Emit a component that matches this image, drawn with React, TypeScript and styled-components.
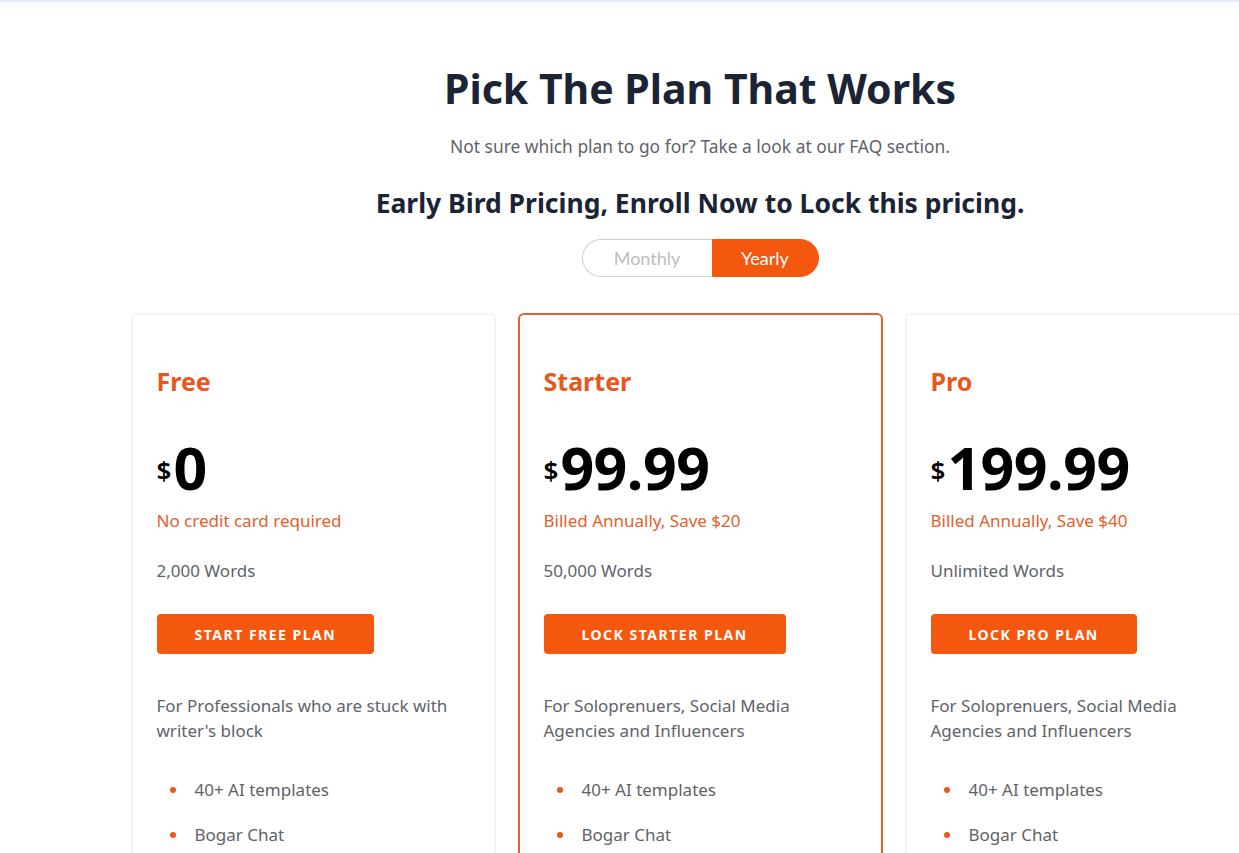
import React from "react";
import styled, { createGlobalStyle } from "styled-components";

const GlobalStyle = createGlobalStyle`
  html, body {
    margin: 0;
    padding: 0;
    background: #fff;
    overflow: hidden;
  }
  body {
    font-family: "Noto Sans", "Open Sans", sans-serif;
  }
`;

const Page = styled.div`
  width: 1400px;
  min-height: 853px;
  border-top: 2px solid #e6eef8;
  background: linear-gradient(#fbfefd 0px, #fff 20px);
  box-sizing: border-box;
`;

const Section = styled.section`
  display: flex;
  flex-direction: column;
  align-items: center;
  padding-top: 58px;
`;

const Title = styled.h1`
  margin: 0;
  font-size: 41px;
  line-height: 56px;
  font-weight: 700;
  color: #1b2434;
`;

const Subtitle = styled.p`
  margin: 18px 0 0;
  font-size: 17.4px;
  line-height: 24px;
  color: #5f6368;
`;

const Promo = styled.h2`
  margin: 27px 0 0;
  font-size: 26.5px;
  line-height: 36px;
  font-weight: 700;
  color: #1b2434;
`;

const Toggle = styled.div`
  display: flex;
  margin-top: 18px;
  height: 38px;
`;

const ToggleOption = styled.button<{ $active?: boolean; $side: "left" | "right" }>`
  font-family: "Lato", "Noto Sans", sans-serif;
  font-size: 18px;
  height: 38px;
  padding: 0;
  cursor: pointer;
  width: ${(p) => (p.$side === "left" ? "130px" : "107px")};
  border: 1px solid ${(p) => (p.$active ? "#f4580f" : "#cfcfcf")};
  border-right: ${(p) => (p.$side === "left" ? "none" : undefined)};
  border-radius: ${(p) => (p.$side === "left" ? "19px 0 0 19px" : "0 19px 19px 0")};
  background: ${(p) => (p.$active ? "#f4580f" : "#fff")};
  color: ${(p) => (p.$active ? "#fff" : "#bdbdbd")};
`;

const Cards = styled.div`
  display: grid;
  grid-template-columns: repeat(3, 365px);
  gap: 22px;
  margin-top: 36px;
`;

const Card = styled.div<{ $featured?: boolean }>`
  border: ${(p) => (p.$featured ? "2px solid #e2622b" : "2px solid #edf4fa")};
  border-radius: 6px;
  padding: 49px 24px 0;
  min-height: 600px;
  background: #fff;
`;

const PlanName = styled.h3`
  margin: 0;
  font-size: 25px;
  line-height: 34px;
  font-weight: 700;
  color: #e8581a;
`;

const Price = styled.div`
  margin: 34px 0 6px;
  display: flex;
  align-items: flex-start;
  color: #000;
  font-weight: 700;
`;

const Currency = styled.span`
  font-size: 26px;
  font-weight: 600;
  line-height: 30px;
  margin-top: 23px;
  margin-right: 2px;
`;

const Amount = styled.span`
  font-size: 59px;
  line-height: 70px;
  letter-spacing: -0.5px;
`;

const Billing = styled.p`
  margin: 0;
  font-size: 17px;
  line-height: 26px;
  color: #e4602a;
`;

const Words = styled.p`
  margin: 24px 0 0;
  font-size: 17px;
  line-height: 26px;
  color: #5f6368;
`;

const CtaButton = styled.button`
  display: block;
  margin-top: 30px;
  height: 40px;
  padding: 0 38px;
  border: none;
  border-radius: 4px;
  background: #f4580f;
  color: #fff;
  font-family: "Noto Sans", sans-serif;
  font-size: 14px;
  font-weight: 700;
  letter-spacing: 1.5px;
  text-transform: uppercase;
  cursor: pointer;
`;

const Description = styled.p`
  margin: 39px 0 0;
  font-size: 17px;
  line-height: 25px;
  color: #5f6368;
`;

const Features = styled.ul`
  margin: 34px 0 0;
  padding: 0;
  list-style: none;
  display: flex;
  flex-direction: column;
  gap: 19px;
`;

const Feature = styled.li`
  display: flex;
  align-items: center;
  font-size: 17px;
  line-height: 26px;
  color: #5f6368;

  &::before {
    content: "";
    width: 6px;
    height: 6px;
    border-radius: 50%;
    background: #e8581a;
    margin: 0 19px 0 13px;
  }
`;

type Plan = {
  name: string;
  price: string;
  billing: string;
  words: string;
  cta: string;
  description: string;
  featured?: boolean;
};

const plans: Plan[] = [
  {
    name: "Free",
    price: "0",
    billing: "No credit card required",
    words: "2,000 Words",
    cta: "Start Free Plan",
    description: "For Professionals who are stuck with writer's block",
  },
  {
    name: "Starter",
    price: "99.99",
    billing: "Billed Annually, Save $20",
    words: "50,000 Words",
    cta: "Lock Starter Plan",
    description: "For Soloprenuers, Social Media Agencies and Influencers",
    featured: true,
  },
  {
    name: "Pro",
    price: "199.99",
    billing: "Billed Annually, Save $40",
    words: "Unlimited Words",
    cta: "Lock Pro Plan",
    description: "For Soloprenuers, Social Media Agencies and Influencers",
  },
];

const features = ["40+ AI templates", "Bogar Chat", "Priority support"];

const App: React.FC = () => {
  return (
    <Page>
      <GlobalStyle />
      <Section>
        <Title>Pick The Plan That Works</Title>
        <Subtitle>Not sure which plan to go for? Take a look at our FAQ section.</Subtitle>
        <Promo>Early Bird Pricing, Enroll Now to Lock this pricing.</Promo>
        <Toggle>
          <ToggleOption $side="left">Monthly</ToggleOption>
          <ToggleOption $side="right" $active>Yearly</ToggleOption>
        </Toggle>
        <Cards>
          {plans.map((plan) => (
            <Card key={plan.name} $featured={plan.featured}>
              <PlanName>{plan.name}</PlanName>
              <Price>
                <Currency>$</Currency>
                <Amount>{plan.price}</Amount>
              </Price>
              <Billing>{plan.billing}</Billing>
              <Words>{plan.words}</Words>
              <CtaButton>{plan.cta}</CtaButton>
              <Description>{plan.description}</Description>
              <Features>
                {features.map((f) => (
                  <Feature key={f}>{f}</Feature>
                ))}
              </Features>
            </Card>
          ))}
        </Cards>
      </Section>
    </Page>
  );
};

export default App;
